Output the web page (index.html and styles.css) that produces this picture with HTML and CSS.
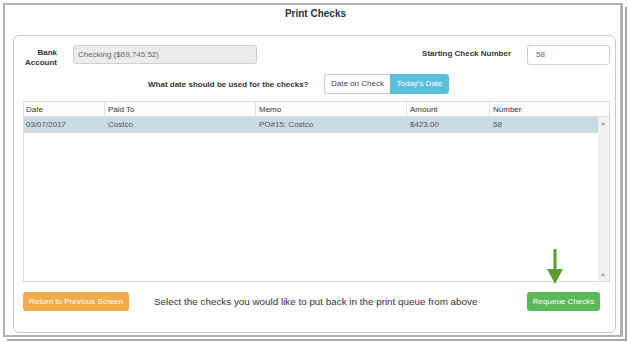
FILE: index.html
```html
<!DOCTYPE html>
<html>
<head>
<meta charset="utf-8">
<link rel="stylesheet" href="styles.css">
</head>
<body>
<div class="window">
  <div class="title">Print Checks</div>
  <div class="panel">
    <div class="row-top">
      <div class="lbl-bank">Bank<br>Account</div>
      <div class="input input-bank">Checking ($69,745.52)</div>
      <div class="spacer"></div>
      <div class="lbl-start">Starting Check Number</div>
      <div class="input input-num">58</div>
    </div>
    <div class="row-date">
      <div class="lbl-date">What date should be used for the checks?</div>
      <div class="btn-group">
        <div class="seg seg-off">Date on Check</div>
        <div class="seg seg-on">Today's Date</div>
      </div>
    </div>
    <div class="grid">
      <div class="grid-head">
        <div class="hc">Date</div>
        <div class="hc">Paid To</div>
        <div class="hc">Memo</div>
        <div class="hc">Amount</div>
        <div class="hc">Number</div>
      </div>
      <div class="grid-body">
        <div class="rows">
          <div class="row sel">
            <div class="c">03/07/2017</div>
            <div class="c">Costco</div>
            <div class="c">PO#15: Costco</div>
            <div class="c">$423.00</div>
            <div class="c">58</div>
          </div>
        </div>
        <div class="sbar">
          <span class="arr-up"></span>
          <span class="arr-down"></span>
        </div>
      </div>
    </div>
    <div class="row-bottom">
      <div class="btn btn-orange">Return to Previous Screen</div>
      <div class="hint">Select the checks you would like to put back in the print queue from above</div>
      <div class="spacer"></div>
      <div class="btn btn-green">Requeue Checks</div>
    </div>
    <svg class="arrow" width="16" height="35" viewBox="0 0 16 35">
      <rect x="6.5" y="0" width="3" height="24" fill="#5b9e2e"/>
      <polygon points="0,20 16,20 8,35" fill="#5b9e2e"/>
    </svg>
  </div>
</div>
</body>
</html>
```
FILE: styles.css
```css
* { box-sizing: border-box; }
html, body { margin: 0; padding: 0; background: #fff; }
body {
  width: 628px;
  height: 342px;
  overflow: hidden;
  font-family: "Liberation Sans", Arial, sans-serif;
  color: #333;
}
.window {
  margin: 3px 0 0 3px;
  width: 620px;
  height: 334px;
  border: 2px solid #b2b2b2;
  border-right-width: 3px;
  background: #fff;
  box-shadow: 2px 2px 0 #fff, 4px 4px 0 #a6a6a6;
  display: flex;
  flex-direction: column;
}
.title {
  padding-top: 2px;
  padding-left: 6px;
  line-height: 14px;
  font-size: 10px;
  font-weight: bold;
  text-align: center;
  color: #1f3345;
}
.panel {
  position: relative;
  margin: 14px 4px 0 8px;
  height: 298px;
  border: 1px solid #c3cbd3;
  border-radius: 6px;
  padding: 9px 5px 0 9px;
  display: flex;
  flex-direction: column;
}
.row-top {
  display: flex;
  align-items: flex-start;
  height: 19px;
}
.lbl-bank {
  width: 34px;
  margin-top: 3px;
  font-size: 8px;
  line-height: 10px;
  font-weight: bold;
  text-align: right;
  color: #333;
}
.input {
  height: 19px;
  border: 1px solid #d0d0d0;
  border-radius: 3px;
  font-size: 8px;
  line-height: 17px;
  padding-left: 4px;
  color: #666;
}
.input-bank {
  margin-left: 16px;
  width: 184px;
  background: #ececec;
}
.spacer { flex: 1; }
.lbl-start {
  font-size: 8px;
  font-weight: bold;
  line-height: 17px;
  margin-right: 16px;
}
.input-num {
  width: 83px;
  height: 20px;
  padding-left: 8px;
  background: #fff;
}
.row-date {
  margin-top: 10px;
  display: flex;
  align-items: center;
  padding-left: 125px;
  height: 20px;
}
.lbl-date {
  font-size: 8px;
  font-weight: bold;
  width: 160px;
  white-space: nowrap;
}
.btn-group {
  margin-left: 16px;
  display: flex;
  height: 20px;
}
.seg {
  font-size: 8px;
  line-height: 18px;
  height: 20px;
  text-align: center;
}
.seg-off {
  width: 66px;
  border: 1px solid #ccc;
  border-right: none;
  border-radius: 3px 0 0 3px;
  background: #fff;
  color: #444;
}
.seg-on {
  width: 59px;
  border: 1px solid #5bc0de;
  border-radius: 0 3px 3px 0;
  background: #5bc0de;
  color: #fff;
}
.grid {
  margin-top: 7px;
  height: 181px;
  border: 1px solid #dcdcdc;
  display: flex;
  flex-direction: column;
  font-size: 8px;
}
.grid-head {
  display: grid;
  grid-template-columns: 81px 151px 151px 83px 1fr;
  height: 15px;
  border-bottom: 1px solid #e2e2e2;
  background: #fdfdfd;
}
.hc {
  line-height: 15px;
  padding-left: 3px;
  border-right: 1px solid #e2e2e2;
  color: #333;
}
.hc:first-child { padding-left: 2px; }
.hc:last-child { border-right: none; }
.grid-body {
  flex: 1;
  display: flex;
}
.rows { flex: 1; }
.row {
  display: grid;
  grid-template-columns: 81px 151px 151px 83px 1fr;
  height: 16px;
}
.row.sel { background: #c8dce1; }
.c {
  line-height: 16px;
  padding-left: 3px;
  color: #555;
}
.c:first-child { padding-left: 2px; }
.sbar {
  width: 11px;
  background: #f1f1f1;
  position: relative;
}
.arr-up, .arr-down {
  position: absolute;
  left: 3px;
  width: 0;
  height: 0;
  border-left: 2.5px solid transparent;
  border-right: 2.5px solid transparent;
}
.arr-up { top: 5px; border-bottom: 3px solid #a3a3a3; }
.arr-down { bottom: 4px; border-top: 3px solid #a3a3a3; }
.row-bottom {
  margin-top: 10px;
  display: flex;
  align-items: center;
  height: 19px;
}
.btn {
  height: 19px;
  border-radius: 3px;
  font-size: 8px;
  line-height: 19px;
  text-align: center;
  color: #fff;
}
.btn-orange {
  width: 106px;
  background: #f0ad4e;
}
.btn-green {
  width: 73px;
  background: #5cb85c;
  margin-right: 10px;
}
.hint {
  margin-left: 25px;
  font-size: 9.85px;
  color: #333;
}
.arrow {
  position: absolute;
  left: 533px;
  top: 213px;
}
```
